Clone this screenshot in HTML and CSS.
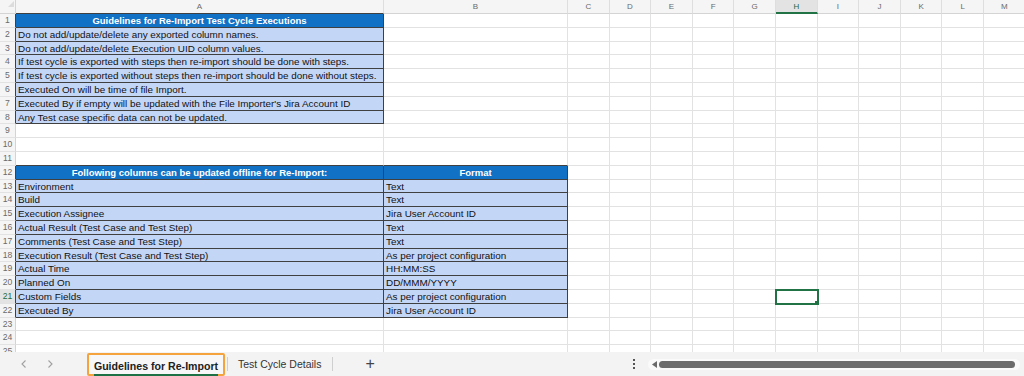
FILE: index.html
```html
<!DOCTYPE html>
<html>
<head>
<meta charset="utf-8">
<link rel="stylesheet" href="styles.css">
</head>
<body>
<div class="sheet">
  <div class="corner"></div><div class="ch a">A</div><div class="ch">B</div><div class="ch">C</div><div class="ch">D</div><div class="ch">E</div><div class="ch">F</div><div class="ch">G</div><div class="ch selc">H</div><div class="ch">I</div><div class="ch">J</div><div class="ch">K</div><div class="ch">L</div><div class="ch">M</div>

  <div class="rh b">1</div><div class="d h">Guidelines for Re-Import Test Cycle Executions</div><div></div><div></div><div></div><div></div><div></div><div></div><div></div><div></div><div></div><div></div><div></div><div></div>
  <div class="rh b">2</div><div class="d">Do not add/update/delete any exported column names.</div><div></div><div></div><div></div><div></div><div></div><div></div><div></div><div></div><div></div><div></div><div></div><div></div>
  <div class="rh b">3</div><div class="d">Do not add/update/delete Execution UID column values.</div><div></div><div></div><div></div><div></div><div></div><div></div><div></div><div></div><div></div><div></div><div></div><div></div>
  <div class="rh b">4</div><div class="d">If test cycle is exported with steps then re-import should be done with steps.</div><div></div><div></div><div></div><div></div><div></div><div></div><div></div><div></div><div></div><div></div><div></div><div></div>
  <div class="rh b">5</div><div class="d">If test cycle is exported without steps then re-import should be done without steps.</div><div></div><div></div><div></div><div></div><div></div><div></div><div></div><div></div><div></div><div></div><div></div><div></div>
  <div class="rh b">6</div><div class="d">Executed On will be time of file Import.</div><div></div><div></div><div></div><div></div><div></div><div></div><div></div><div></div><div></div><div></div><div></div><div></div>
  <div class="rh b">7</div><div class="d">Executed By if empty will be updated with the File Importer's Jira Account ID</div><div></div><div></div><div></div><div></div><div></div><div></div><div></div><div></div><div></div><div></div><div></div><div></div>
  <div class="rh b">8</div><div class="d">Any Test case specific data can not be updated.</div><div></div><div></div><div></div><div></div><div></div><div></div><div></div><div></div><div></div><div></div><div></div><div></div>
  <div class="rh">9</div><div></div><div></div><div></div><div></div><div></div><div></div><div></div><div></div><div></div><div></div><div></div><div></div><div></div>
  <div class="rh">10</div><div></div><div></div><div></div><div></div><div></div><div></div><div></div><div></div><div></div><div></div><div></div><div></div><div></div>
  <div class="rh">11</div><div class="top"></div><div class="top"></div><div></div><div></div><div></div><div></div><div></div><div></div><div></div><div></div><div></div><div></div><div></div>

  <div class="rh b">12</div><div class="d h">Following columns can be updated offline for Re-Import:</div><div class="d h">Format</div><div></div><div></div><div></div><div></div><div></div><div></div><div></div><div></div><div></div><div></div><div></div>
  <div class="rh b">13</div><div class="d">Environment</div><div class="d">Text</div><div></div><div></div><div></div><div></div><div></div><div></div><div></div><div></div><div></div><div></div><div></div>
  <div class="rh b">14</div><div class="d">Build</div><div class="d">Text</div><div></div><div></div><div></div><div></div><div></div><div></div><div></div><div></div><div></div><div></div><div></div>
  <div class="rh b">15</div><div class="d">Execution Assignee</div><div class="d">Jira User Account ID</div><div></div><div></div><div></div><div></div><div></div><div></div><div></div><div></div><div></div><div></div><div></div>
  <div class="rh b">16</div><div class="d">Actual Result (Test Case and Test Step)</div><div class="d">Text</div><div></div><div></div><div></div><div></div><div></div><div></div><div></div><div></div><div></div><div></div><div></div>
  <div class="rh b">17</div><div class="d">Comments (Test Case and Test Step)</div><div class="d">Text</div><div></div><div></div><div></div><div></div><div></div><div></div><div></div><div></div><div></div><div></div><div></div>
  <div class="rh b">18</div><div class="d">Execution Result (Test Case and Test Step)</div><div class="d">As per project configuration</div><div></div><div></div><div></div><div></div><div></div><div></div><div></div><div></div><div></div><div></div><div></div>
  <div class="rh b">19</div><div class="d">Actual Time</div><div class="d">HH:MM:SS</div><div></div><div></div><div></div><div></div><div></div><div></div><div></div><div></div><div></div><div></div><div></div>
  <div class="rh b">20</div><div class="d">Planned On</div><div class="d">DD/MMM/YYYY</div><div></div><div></div><div></div><div></div><div></div><div></div><div></div><div></div><div></div><div></div><div></div>
  <div class="rh b selr">21</div><div class="d">Custom Fields</div><div class="d">As per project configuration</div><div></div><div></div><div></div><div></div><div></div><div class="sel"></div><div></div><div></div><div></div><div></div><div></div>
  <div class="rh b">22</div><div class="d">Executed By</div><div class="d">Jira User Account ID</div><div></div><div></div><div></div><div></div><div></div><div></div><div></div><div></div><div></div><div></div><div></div>
  <div class="rh">23</div><div></div><div></div><div></div><div></div><div></div><div></div><div></div><div></div><div></div><div></div><div></div><div></div><div></div>
  <div class="rh">24</div><div></div><div></div><div></div><div></div><div></div><div></div><div></div><div></div><div></div><div></div><div></div><div></div><div></div>
  <div class="rh">25</div><div></div><div></div><div></div><div></div><div></div><div></div><div></div><div></div><div></div><div></div><div></div><div></div><div></div>
</div>

<div class="tabbar">
  <div class="nav">
    <svg class="arrow" width="10" height="10" viewBox="0 0 10 10"><path d="M6.5 1.5 L3 5 L6.5 8.5" fill="none" stroke="#a0a0a0" stroke-width="1.1"/></svg>
    <svg class="arrow" width="10" height="10" viewBox="0 0 10 10"><path d="M3.5 1.5 L7 5 L3.5 8.5" fill="none" stroke="#a0a0a0" stroke-width="1.1"/></svg>
  </div>
  <div class="tab active"><span class="tab-label">Guidelines for Re-Import</span></div>
  <div class="sep"></div>
  <div class="tab">Test Cycle Details</div>
  <div class="sep"></div>
  <div class="add">+</div>
  <div class="spacer"></div>
  <div class="dots"><span></span><span></span><span></span></div>
  <div class="track">
    <svg class="tri" width="5" height="7" viewBox="0 0 5 7"><path d="M5 0 L0 3.5 L5 7 Z" fill="#6b6b6b"/></svg>
    <div class="thumb"></div>
  </div>
</div>
</body>
</html>
```
FILE: styles.css
```css
html, body {
  margin: 0;
  padding: 0;
}
body {
  width: 1024px;
  height: 376px;
  overflow: hidden;
  background: #ffffff;
  font-family: "Liberation Sans", Arial, sans-serif;
}

.sheet {
  display: grid;
  grid-template-columns: 16px 368px 184px repeat(11, 41.6px);
  grid-template-rows: 14px repeat(25, 13.8px);
  height: 352px;
  overflow: hidden;
}

.sheet > div {
  box-sizing: border-box;
  border-right: 1px solid #e2e2e2;
  border-bottom: 1px solid #e2e2e2;
  font-size: 9.9px;
  line-height: 13px;
  padding: 0 2px;
  white-space: nowrap;
  overflow: hidden;
  color: #111;
}

.sheet > .corner {
  background: #f5f5f5;
  border-bottom-color: #d4d4d4;
  border-right-color: #d4d4d4;
  position: relative;
}
.sheet > .corner::after {
  content: "";
  position: absolute;
  right: 1px;
  top: 1px;
  width: 0;
  height: 0;
  border-left: 6px solid transparent;
  border-bottom: 6px solid #dcdcdc;
}

.sheet > .ch {
  background: #f5f5f5;
  color: #6a6a6a;
  font-size: 8px;
  text-align: center;
  line-height: 13px;
  border-bottom-color: #d4d4d4;
  border-right-color: #dedede;
}
.sheet > .ch.a {
  border-bottom-color: #404040;
}
.sheet > .ch.selc {
  background: #e3e3e3;
  color: #1d6b3f;
  border-bottom: 2px solid #217346;
}

.sheet > .rh {
  background: #f5f5f5;
  color: #6a6a6a;
  font-size: 8.6px;
  text-align: center;
  padding: 0;
  line-height: 13.5px;
  border-bottom-color: #e2e2e2;
  border-right-color: #d4d4d4;
}
.sheet > .rh.b {
  border-right-color: #404040;
}
.sheet > .rh.selr {
  background: #e3e3e3;
  color: #1d6b3f;
}

.sheet > .top {
  border-bottom-color: #404040;
}

.sheet > .d {
  background: #c4d6f6;
  border-right-color: #404040;
  border-bottom-color: #404040;
  padding-left: 2px;
}
.sheet > .h {
  background: #1171c5;
  color: #ffffff;
  font-weight: bold;
  font-size: 9.5px;
  text-align: center;
}

.sheet > .sel {
  position: relative;
  outline: 2px solid #217346;
  outline-offset: -1px;
}
.sheet > .sel::after {
  content: "";
  position: absolute;
  right: -3px;
  bottom: -3px;
  width: 4px;
  height: 4px;
  background: #217346;
  border: 1px solid #ffffff;
}

/* tab bar */
.tabbar {
  height: 24px;
  background: #f3f3f3;
  display: flex;
  align-items: center;
  font-family: "Liberation Sans", Arial, sans-serif;
}
.nav {
  display: flex;
  gap: 16px;
  margin-left: 19px;
  align-items: center;
}
.arrow {
  display: block;
}
.tab {
  font-size: 10.5px;
  color: #333;
  padding: 0 9px 0 10px;
  line-height: 22px;
}
.tab.active {
  margin-left: 32px;
  box-sizing: border-box;
  width: 138px;
  height: 23px;
  margin-top: 1px;
  border: 2px solid #f5a33c;
  border-radius: 2px;
  background: #f7f7f7;
  padding: 0;
  text-align: center;
  font-weight: bold;
  font-size: 10.6px;
  color: #222;
}
.tab-label {
  display: inline-block;
  line-height: 14px;
  border-bottom: 2px solid #1e7145;
  padding-bottom: 1px;
  margin-top: 1px;
}
.sep {
  width: 1px;
  height: 14px;
  background: #cfcfcf;
  margin-left: 2px;
}
.add {
  margin-left: 32px;
  font-size: 16px;
  color: #444;
  line-height: 22px;
}
.spacer {
  flex: 1;
}
.dots {
  display: flex;
  flex-direction: column;
  gap: 2px;
  width: 4px;
  align-items: center;
}
.dots span {
  width: 2px;
  height: 2px;
  background: #555;
}
.track {
  margin-left: 12px;
  margin-right: 4px;
  width: 372px;
  height: 11px;
  border-radius: 6px;
  background: #fafafa;
  display: flex;
  align-items: center;
  box-sizing: border-box;
  padding-left: 4px;
}
.tri {
  display: block;
}
.thumb {
  margin-left: 2px;
  width: 356px;
  height: 7px;
  border-radius: 4px;
  background: #6c6c6c;
}
```
